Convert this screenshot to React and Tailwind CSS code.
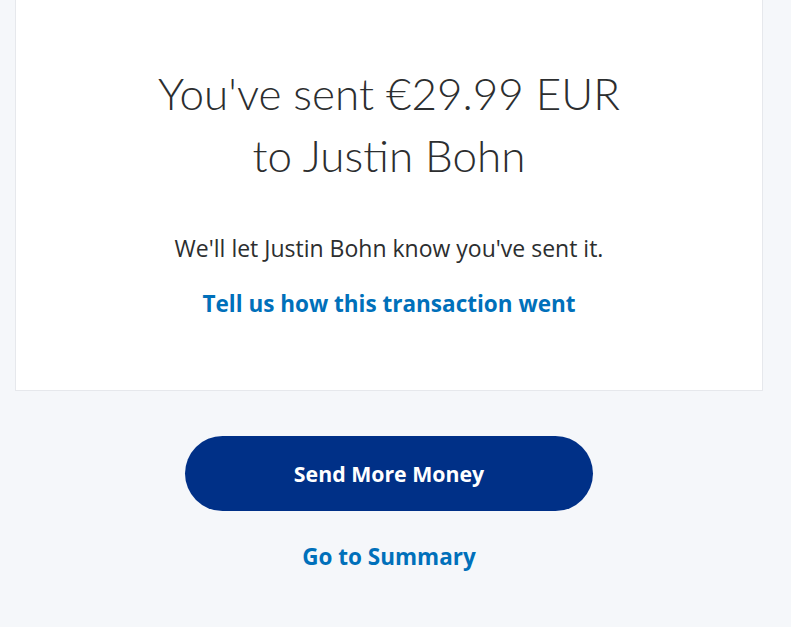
export default function App() {
  return (
    <div className="min-h-[627px] bg-[#f5f7fa] pl-[15px] pr-[28px] font-['Open_Sans',sans-serif]">
      {/* Confirmation card */}
      <div className="bg-white border-b border-l border-r border-[#e6e8ec] h-[391px] flex flex-col items-center text-center">
        <h1 className="mt-[62px] text-[44px] leading-[62px] font-light text-[#2c2e2f] font-['Lato',sans-serif]">
          You've sent €29.99 EUR
          <br />
          to Justin Bohn
        </h1>
        <p className="mt-[47px] text-[23px] leading-[30px] text-[#2c2e2f]">We'll let Justin Bohn know you've sent it.</p>
        <a href="#" className="mt-[26px] text-[22.5px] leading-[30px] font-bold text-[#0070ba]">Tell us how this transaction went</a>
      </div>

      {/* Actions */}
      <div className="flex flex-col items-center">
        <button className="mt-[45px] w-[408px] h-[75px] rounded-full bg-[#003087] text-white text-[21.3px] font-bold">
          Send More Money
        </button>
        <a href="#" className="mt-[31px] text-[22.5px] leading-[30px] font-bold text-[#0070ba]">Go to Summary</a>
      </div>
    </div>
  )
}
